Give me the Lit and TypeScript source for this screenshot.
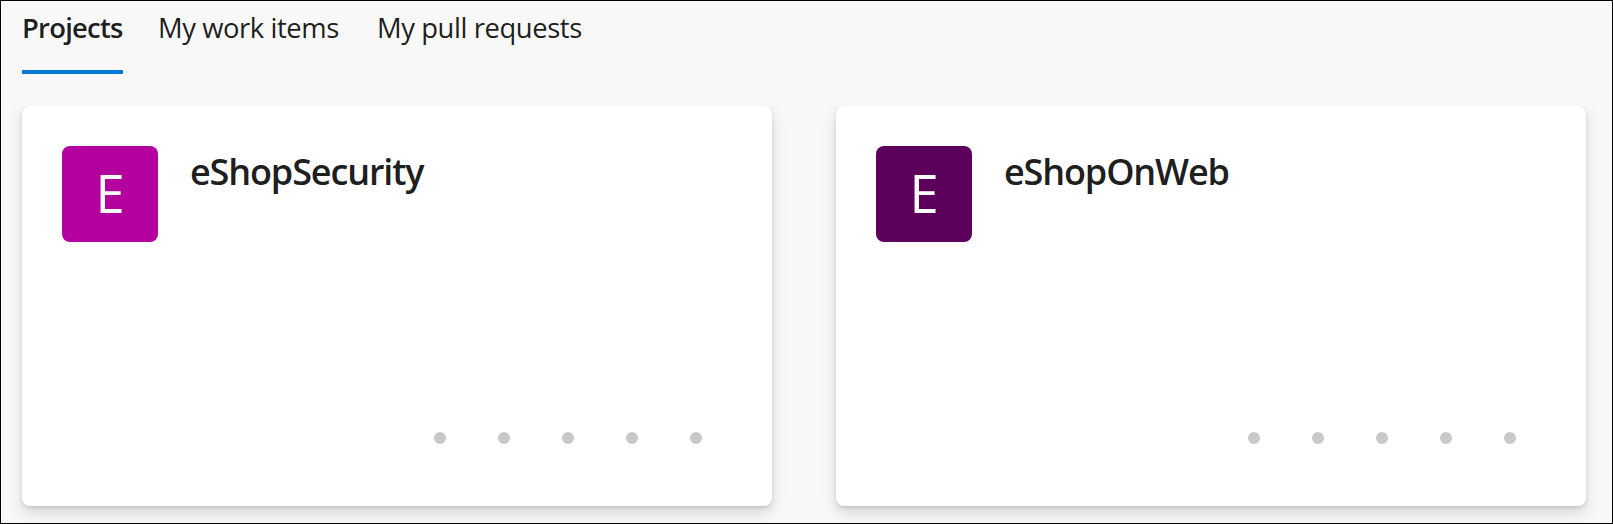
import { LitElement, html, css } from "lit";
import { customElement, property } from "lit/decorators.js";
import { classMap } from "lit/directives/class-map.js";

@customElement("project-card")
class ProjectCard extends LitElement {
  @property() name = "";
  @property() tone = "magenta";

  static styles = css`
    :host { display: block; width: 750px; height: 400px; }
    .card {
      box-sizing: border-box; width: 100%; height: 100%; padding: 40px 70px 62px 40px;
      display: flex; flex-direction: column; justify-content: space-between;
      background: #fff; border-radius: 8px;
      box-shadow: 0 6.4px 14.4px rgba(0, 0, 0, 0.132), 0 1.2px 3.6px rgba(0, 0, 0, 0.108);
    }
    .head { display: flex; gap: 32px; }
    .avatar {
      width: 96px; height: 96px; border-radius: 8px; color: #fff;
      font-size: 52.5px; line-height: 94px; text-align: center;
    }
    .magenta { background: #b4009e; }
    .plum { background: #5c005c; }
    .name {
      margin: 0; padding-top: 3px; font-size: 36px; line-height: 46px; font-weight: 600;
      letter-spacing: -1.13px; white-space: nowrap; color: rgba(0, 0, 0, 0.9);
    }
    .dots { display: flex; justify-content: flex-end; gap: 52px; }
    .dot { width: 12px; height: 12px; border-radius: 50%; background: #c8c8c8; }
  `;

  render() {
    return html`<article class="card">
      <div class="head">
        <div class=${classMap({ avatar: true, [this.tone]: true })}>E</div>
        <h2 class="name">${this.name}</h2>
      </div>
      <div class="dots">${[0, 1, 2, 3, 4].map(() => html`<span class="dot"></span>`)}</div>
    </article>`;
  }
}

@customElement("app-root")
class AppRoot extends LitElement {
  static styles = css`
    :host { display: block; font-family: "Open Sans", "Noto Sans", sans-serif; }
    .page {
      box-sizing: border-box; width: 1613px; height: 524px; overflow: hidden;
      border: 1px solid #000; background: #f8f8f8;
    }
    .tabs { display: flex; height: 73px; padding-left: 21px; }
    .tab {
      box-sizing: border-box; padding-top: 7px; height: 73px; white-space: nowrap;
      font-size: 27.4px; line-height: 40px; color: rgba(0, 0, 0, 0.9);
    }
    .active { width: 101px; margin-right: 35px; border-bottom: 4px solid #0078d4; font-weight: 600; letter-spacing: -0.75px; }
    .items { width: 219px; letter-spacing: -0.43px; }
    .pulls { letter-spacing: -0.41px; }
    .grid { display: flex; gap: 64px; height: 417px; margin-top: 32px; padding-left: 21px; overflow: hidden; }
  `;

  render() {
    return html`<main class="page">
      <nav class="tabs">
        <div class="tab active">Projects</div>
        <div class="tab items">My work items</div>
        <div class="tab pulls">My pull requests</div>
      </nav>
      <section class="grid">
        <project-card name="eShopSecurity" tone="magenta"></project-card>
        <project-card name="eShopOnWeb" tone="plum"></project-card>
      </section>
    </main>`;
  }
}
